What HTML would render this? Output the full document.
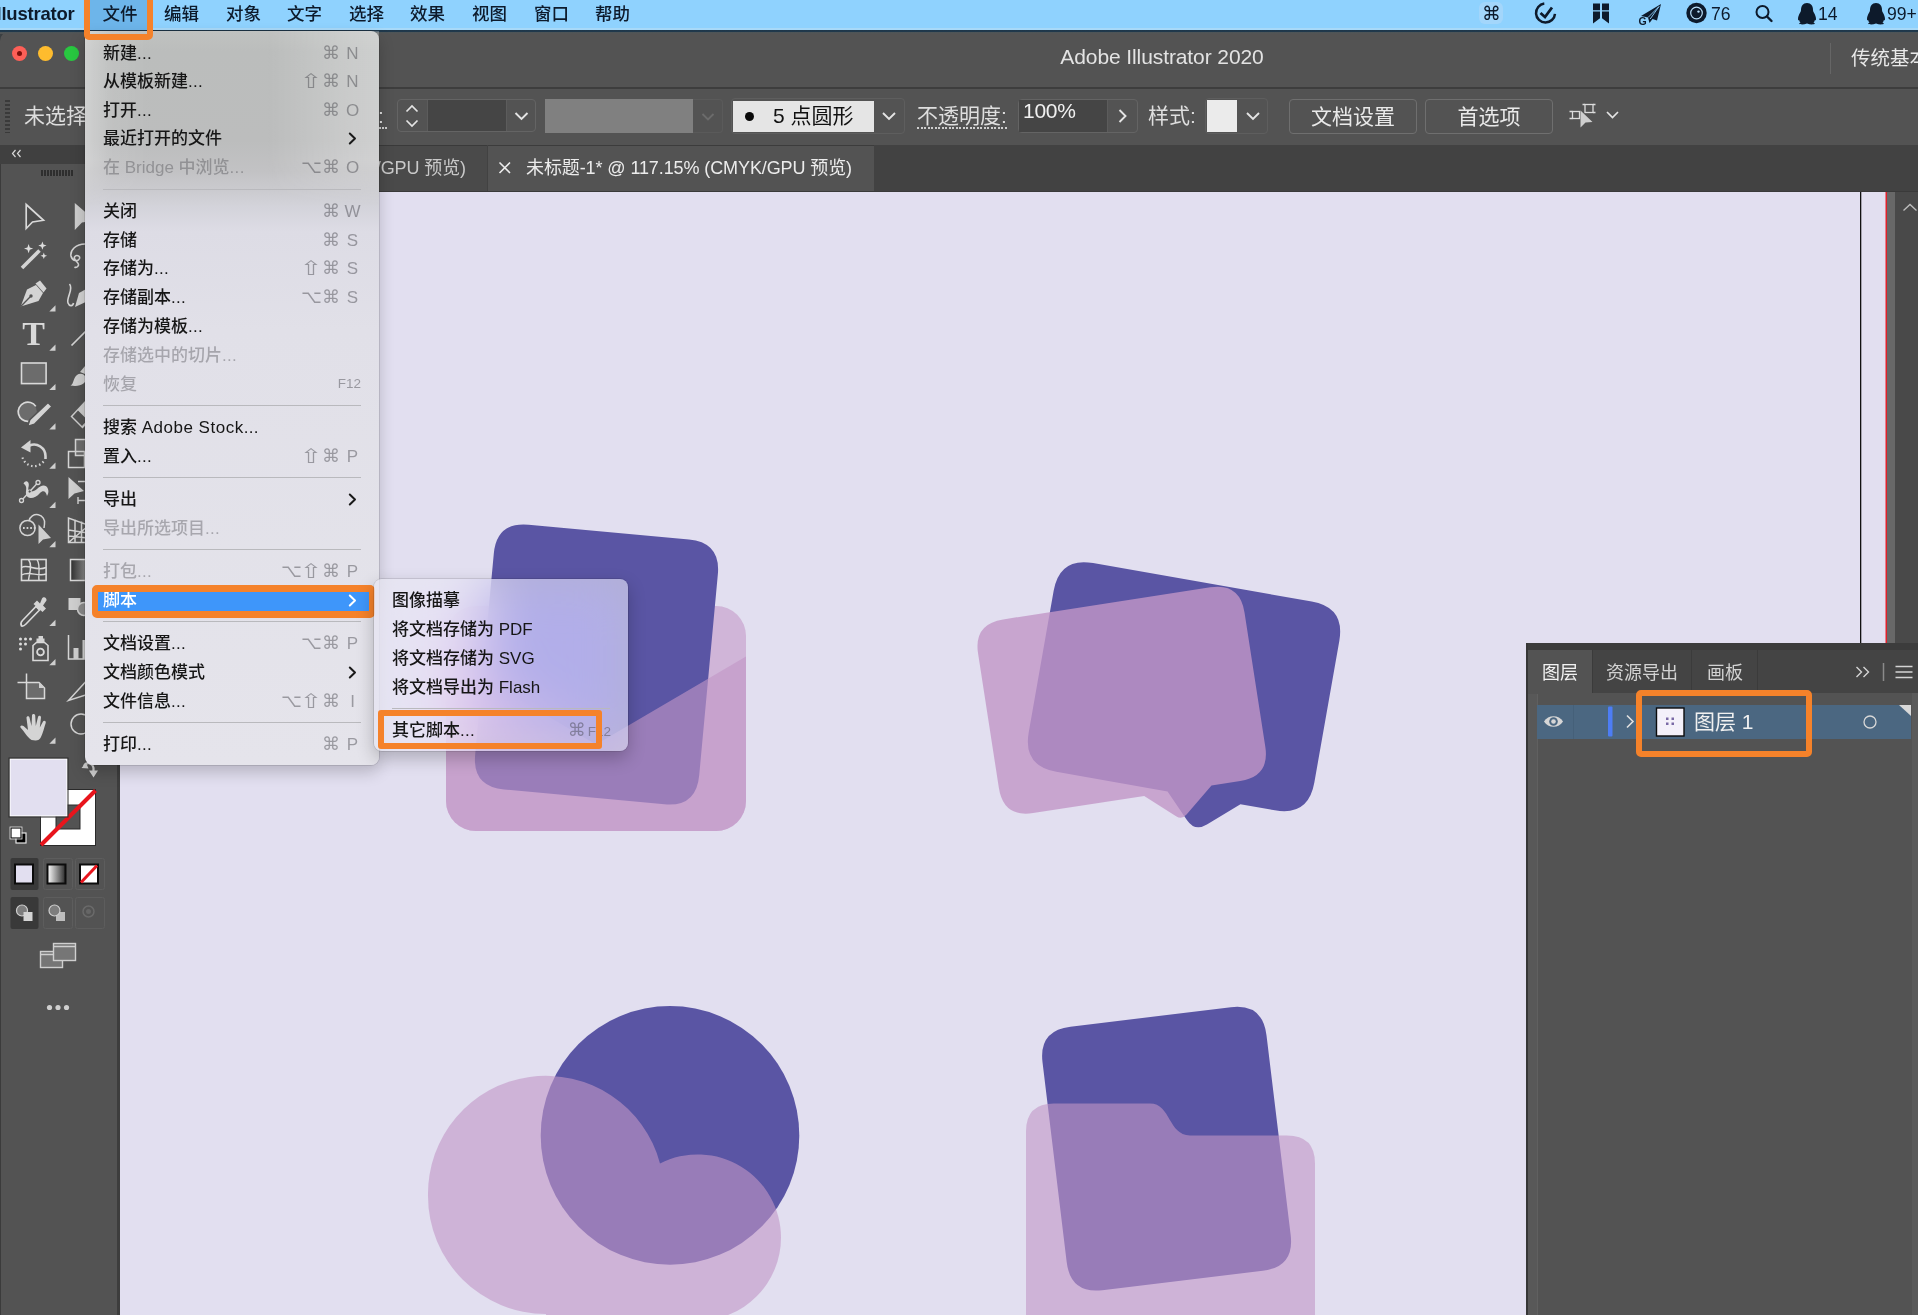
<!DOCTYPE html>
<html lang="zh-CN">
<head>
<meta charset="utf-8">
<title>Adobe Illustrator 2020</title>
<style>
html,body{margin:0;padding:0;background:#535353;}
body{width:1918px;height:1315px;overflow:hidden;position:relative;font-family:"Liberation Sans","Noto Sans CJK SC",sans-serif;color:#e6e6e6;}
.abs{position:absolute;}
#root{position:absolute;left:0;top:0;width:1918px;height:1315px;overflow:hidden;background:#535353;}
/* mac menubar */
#macbar{left:0;top:0;width:1918px;height:30px;background:linear-gradient(#8fd2fe 0,#8fd2fe 28px,#a8d9f8 28.2px,#a8d9f8 30px);}
#macbar .mi{position:absolute;top:0;height:28px;line-height:28px;font-size:17.5px;font-weight:500;color:#0d1a2b;white-space:nowrap;}
#macshadow{left:0;top:29.6px;width:1918px;height:4px;background:linear-gradient(#1d364a 0,#213a4c 45%,#4d5558 60%,#545454 100%);}
/* title bar */
#titlebar{left:0;top:32px;width:1918px;height:55px;background:#535353;}
#titleline{left:0;top:87px;width:1918px;height:2px;background:#3d3d3d;}
.tl{position:absolute;width:15px;height:15px;border-radius:50%;top:46px;}
/* control bar */
#ctrlbar{left:0;top:89px;width:1918px;height:56px;background:#535353;}
/* tab bar */
#tabbar{left:0;top:145px;width:1918px;height:47px;background:#424242;}
/* canvas */
#canvas{left:120px;top:192px;width:1798px;height:1123px;background:#e2dff0;}
/* toolbar */
#toolbar{left:0;top:164px;width:118px;height:1151px;background:#535353;}
/* menu */
.menu{position:absolute;border-radius:8px;box-shadow:0 0 0 1px rgba(0,0,0,.10),0 7px 16px rgba(0,0,0,.2);}
.menu .row{position:absolute;left:0;right:0;height:29px;line-height:30px;font-size:17px;color:#161616;white-space:nowrap;}
.menu .row .l{position:absolute;left:18px;top:0;font-weight:500;}
.menu .row .r{position:absolute;right:18px;top:-1px;color:rgba(60,60,67,.44);letter-spacing:0;}
.shift{display:inline-block;transform:scale(1.45,1.12);transform-origin:60% 55%;margin-right:3px;margin-left:2px;}
.kb{font-size:18px;}
.dots{letter-spacing:0.3px;}
.menu .row.dis .l{color:rgba(60,60,67,.36);}
.menu .sep{position:absolute;left:18px;right:18px;height:1px;background:#b9b9bd;}
.menu .row.sel .l{color:#fff;}
.menu .row .key{display:inline-block;width:17px;text-align:center;margin-left:4px;}
.chev{position:absolute;right:22px;top:8px;width:9px;height:13px;}
.kb{font-family:"DejaVu Sans","Liberation Sans",sans-serif;}
.btn{border:1.5px solid #6f6f6f;border-radius:4px;box-sizing:border-box;text-align:center;font-size:21px;line-height:33px;color:#e9e9e9;white-space:nowrap;}
.orange{position:absolute;border:6px solid #f5822a;border-radius:6px;box-sizing:border-box;}
</style>
</head>
<body>
<div id="root">

<!-- canvas -->
<div id="canvas" class="abs"></div>

<!-- artwork -->
<svg class="abs" style="left:0;top:0" width="1918" height="1315" viewBox="0 0 1918 1315" id="art">
<defs><clipPath id="envclip"><rect x="446" y="606" width="300" height="225" rx="30" ry="30"/></clipPath></defs>
<!-- 1: envelope -->
<rect x="446" y="606" width="300" height="225" rx="30" ry="30" fill="#c296c7" fill-opacity="0.58"/>
<path d="M-80.5 -133.0 H80.5 Q112.5 -133.0 112.5 -101.0 V101.0 Q112.5 133.0 80.5 133.0 H-80.5 Q-112.5 133.0 -112.5 101.0 V-101.0 Q-112.5 -133.0 -80.5 -133.0 Z" transform="translate(596.5 664.5) rotate(5.3)" fill="#5a55a4"/>
<path d="M446 656.500 L596 744.500 L746 656.500 V840 H446 Z" clip-path="url(#envclip)" fill="#c296c7" fill-opacity="0.62"/>
<!-- 2: chat bubbles -->
<path d="M-111.0 -106.0 H111.0 Q145.0 -106.0 145.0 -72.0 V72.0 Q145.0 106.0 111.0 106.0 H76.0 L46.5 131.8 Q36.0 141.0 26.2 131.0 L2.0 106.0 H-111.0 Q-145.0 106.0 -145.0 72.0 V-72.0 Q-145.0 -106.0 -111.0 -106.0 Z" transform="translate(1184 686.7) rotate(10)" fill="#5a55a4"/>
<path d="M-104.8 -98.0 H104.8 Q134.8 -98.0 134.8 -68.0 V68.0 Q134.8 98.0 104.8 98.0 H75.7 L46.6 122.9 Q41.3 127.5 36.0 122.9 L7.6 98.0 H-104.8 Q-134.8 98.0 -134.8 68.0 V-68.0 Q-134.8 -98.0 -104.8 -98.0 Z" transform="translate(1121.7 700.2) rotate(-8.8)" fill="#c296c7" fill-opacity="0.8"/>
<!-- 3: circle + cloud -->
<circle cx="670" cy="1135.4" r="129.3" fill="#5a55a4"/>
<path d="M428 1196 A118 118 0 0 1 660 1163.4 A83.300 83.300 0 0 1 781 1237.500 A83.300 83.300 0 0 1 698 1320.800 H546 V1314 A118 118 0 0 1 428 1196 Z" fill="#c296c7" fill-opacity="0.6"/>
<!-- 4: folder -->
<path d="M-80.8 -132.7 H80.8 Q112.8 -132.7 112.8 -100.7 V100.7 Q112.8 132.7 80.8 132.7 H-80.8 Q-112.8 132.7 -112.8 100.7 V-100.7 Q-112.8 -132.7 -80.8 -132.7 Z" transform="translate(1166.6 1148.7) rotate(-6.9)" fill="#5a55a4"/>
<path d="M1026 1340 V1131.600 Q1026 1103.600 1054 1103.600 H1150 C1171 1103.600 1168 1135.400 1190 1135.400 H1287 Q1315 1135.400 1315 1163.400 V1340 Z" fill="#c296c7" fill-opacity="0.6"/>
<!-- artboard edge / bleed -->
<rect x="1860" y="192" width="1.300" height="460" fill="#111"/>
<rect x="1885.500" y="192" width="1.500" height="460" fill="#e0202a"/>
<rect x="1887" y="192" width="8" height="460" fill="#686868"/>
<rect x="1895" y="192" width="23" height="460" fill="#494949"/>
<path d="M1903.500 210.500 L1910 204.500 L1916.500 210.500" fill="none" stroke="#bdbdbd" stroke-width="1.300"/>
</svg>

<!-- title bar, control bar, tab bar -->
<div id="titlebar" class="abs">
<div class="abs" style="left:0;top:0;width:1918px;height:55px;"></div>
</div>
<svg class="abs" style="left:0;top:31px" width="12" height="12" viewBox="0 0 12 12"><path d="M0 0 H10 A10 10 0 0 0 0 10 Z" fill="#3a3f42"/></svg>
<div class="tl" style="left:11.500px;background:#fe5f57;"></div>
<div class="abs" style="left:16.500px;top:51px;width:5px;height:5px;border-radius:50%;background:#7d0f0a;"></div>
<div class="tl" style="left:37.500px;background:#febc2e;"></div>
<div class="tl" style="left:63.500px;background:#28c840;"></div>
<div class="abs" style="left:962px;top:44px;width:400px;text-align:center;font-size:21px;line-height:26px;color:#e3e3e3;font-weight:normal;letter-spacing:-0.1px;">Adobe Illustrator 2020</div>
<div class="abs" style="left:1830px;top:43px;width:1px;height:31px;background:#666;"></div>
<div class="abs" style="left:1851px;top:44px;font-size:19.5px;line-height:28px;color:#e9e9e9;white-space:nowrap;">传统基本功能</div>
<div id="titleline" class="abs"></div>
<div id="ctrlbar" class="abs"></div>
<!-- control bar contents (absolute page coords) -->
<div class="abs" style="left:5px;top:100px;width:5px;height:33px;background:repeating-linear-gradient(#3a3a3a 0 2px,#535353 2px 4px);"></div>
<div class="abs cb-t" style="left:24px;top:101px;font-size:21px;line-height:30px;color:#dedede;white-space:nowrap;">未选择对象</div>
<div class="abs cb-t" style="left:378px;top:101px;font-size:21px;line-height:30px;color:#dedede;">:</div>
<div class="abs" style="left:340px;top:127px;width:47px;height:2px;background:repeating-linear-gradient(90deg,#cfcfcf 0 2px,transparent 2px 3.5px);"></div>
<!-- stepper group -->
<div class="abs" style="left:397px;top:99px;width:139px;height:33px;border:1px solid #646464;border-radius:4px;box-sizing:border-box;background:#535353;"></div>
<div class="abs" style="left:427px;top:100px;width:80px;height:31px;background:#454545;border-left:1px solid #5c5c5c;border-right:1px solid #5c5c5c;box-sizing:border-box;"></div>
<svg class="abs" style="left:397px;top:99px" width="140" height="34" viewBox="0 0 140 34">
<path d="M9.500 12.500 L15 7 L20.500 12.500 M9.500 21.500 L15 27 L20.500 21.500" fill="none" stroke="#e4e4e4" stroke-width="1.700"/>
<path d="M118.500 14 L124.500 20 L130.500 14" fill="none" stroke="#e4e4e4" stroke-width="1.900"/>
</svg>
<!-- gray box -->
<div class="abs" style="left:545px;top:99px;width:148px;height:34px;background:#808080;"></div>
<div class="abs" style="left:693px;top:99px;width:30px;height:34px;border:1px solid #5a5a5a;border-left:none;border-radius:0 4px 4px 0;box-sizing:border-box;"></div>
<svg class="abs" style="left:693px;top:99px" width="30" height="34" viewBox="0 0 30 34"><path d="M9.500 15 L15 20.500 L20.500 15" fill="none" stroke="#6c6c6c" stroke-width="1.800"/></svg>
<!-- brush -->
<div class="abs" style="left:731px;top:98px;width:174px;height:36px;border:1px solid #5e5e5e;border-radius:4px;box-sizing:border-box;"></div>
<div class="abs" style="left:733px;top:100.500px;width:141px;height:31.500px;background:#e5e5e5;"></div>
<div class="abs" style="left:744.500px;top:111.500px;width:9px;height:9px;border-radius:50%;background:#0a0a0a;"></div>
<div class="abs" style="left:773px;top:100px;font-size:21px;line-height:32px;color:#111;white-space:nowrap;">5 点圆形</div>
<svg class="abs" style="left:874px;top:99px" width="30" height="34" viewBox="0 0 30 34"><path d="M9 14 L15 20 L21 14" fill="none" stroke="#e4e4e4" stroke-width="1.900"/></svg>
<!-- opacity -->
<div class="abs" style="left:917px;top:101px;font-size:21px;line-height:30px;color:#dedede;white-space:nowrap;border-bottom:0;">不透明度:</div>
<div class="abs" style="left:917px;top:127px;width:91px;height:2px;background:repeating-linear-gradient(90deg,#cfcfcf 0 2px,transparent 2px 3.500px);"></div>
<div class="abs" style="left:1018px;top:99px;width:120px;height:34px;border:1px solid #646464;border-radius:4px;box-sizing:border-box;"></div>
<div class="abs" style="left:1019px;top:100px;width:89px;height:32px;background:#454545;border-right:1px solid #5c5c5c;box-sizing:border-box;"></div>
<div class="abs" style="left:1023px;top:96px;font-size:21px;line-height:30px;color:#f0f0f0;white-space:nowrap;letter-spacing:-0.3px;">100%</div>
<svg class="abs" style="left:1108px;top:99px" width="30" height="34" viewBox="0 0 30 34"><path d="M11.500 11 L17.500 17 L11.500 23" fill="none" stroke="#e4e4e4" stroke-width="1.900"/></svg>
<!-- style -->
<div class="abs" style="left:1148px;top:101px;font-size:21px;line-height:30px;color:#dedede;white-space:nowrap;">样式:</div>
<div class="abs" style="left:1205px;top:98px;width:63px;height:36px;border:1px solid #5e5e5e;border-radius:4px;box-sizing:border-box;"></div>
<div class="abs" style="left:1207px;top:100px;width:30px;height:32px;background:#ebebeb;"></div>
<svg class="abs" style="left:1237px;top:99px" width="30" height="34" viewBox="0 0 30 34"><path d="M10 14 L16 20 L22 14" fill="none" stroke="#e4e4e4" stroke-width="1.900"/></svg>
<!-- buttons -->
<div class="abs btn" style="left:1289px;top:99px;width:128px;height:35px;">文档设置</div>
<div class="abs btn" style="left:1425px;top:99px;width:128px;height:35px;">首选项</div>
<svg class="abs" style="left:1565px;top:99px" width="60" height="34" viewBox="1565 99 60 34">
<rect x="1572.500" y="111.500" width="7" height="7" fill="none" stroke="#dcdcdc" stroke-width="1.300"/>
<path d="M1569.500 111.500 h3 M1569.500 118.500 h3" stroke="#dcdcdc" stroke-width="1.300"/>
<rect x="1585" y="104.500" width="8" height="8" fill="#535353" stroke="#dcdcdc" stroke-width="1.300"/>
<path d="M1582.500 104.500 h2.500 M1593 104.500 h2.500 M1593 112.500 h2.500" stroke="#dcdcdc" stroke-width="1.300"/>
<path d="M1580.500 110.500 L1580.500 127.500 L1585.500 122.500 L1592.500 122 Z" fill="#cfcfcf"/>
<path d="M1607 112 L1612.500 117.500 L1618 112" fill="none" stroke="#e4e4e4" stroke-width="1.700"/>
</svg>

<div id="tabbar" class="abs">
<div class="abs" style="left:120px;top:0;width:367px;height:47px;background:#4a4a4a;border-top:1px solid #3a3a3a;box-sizing:border-box;"></div>
<div class="abs" style="left:488px;top:0;width:386px;height:47px;background:#535353;border-top:1px solid #3c3c3c;box-sizing:border-box;"></div>
<div class="abs" style="left:216px;top:9px;width:250px;text-align:right;font-size:18px;letter-spacing:-0.1px;line-height:29px;color:#c9c9c9;white-space:nowrap;">(CMYK/GPU 预览)</div>
<svg class="abs" style="left:497px;top:15px" width="16" height="16" viewBox="0 0 16 16"><path d="M2.500 2.500 L13 13 M13 2.500 L2.500 13" stroke="#ececec" stroke-width="1.600"/></svg>
<div class="abs" style="left:526px;top:9px;font-size:18px;letter-spacing:-0.1px;line-height:29px;color:#ececec;white-space:nowrap;">未标题-1* @ 117.15% (CMYK/GPU 预览)</div>
</div>
<div class="abs" style="left:120px;top:190.5px;width:1798px;height:1.5px;background:#3a3a3a;"></div>
<div class="abs" style="left:0;top:145px;width:120px;height:19px;background:#404040;"></div>
<svg class="abs" style="left:8px;top:147px" width="20" height="14" viewBox="0 0 20 14"><path d="M7.500 3 L4.500 6.500 L7.500 10 M12.500 3 L9.500 6.500 L12.500 10" fill="none" stroke="#d8d8d8" stroke-width="1.200"/></svg>


<!-- toolbar -->
<div id="toolbar" class="abs">
<div class="abs" style="left:0;top:0;width:1.3px;height:1153px;background:#3b3b3b;"></div>
<div class="abs" style="left:116.5px;top:0;width:3.5px;height:1153px;background:#3d3d3d;"></div>
<div class="abs" style="left:41px;top:5.5px;width:32px;height:6.5px;background:repeating-linear-gradient(90deg,#2e2e2e 0 2px,#535353 2px 3px);"></div>
</div>
<svg class="abs" style="left:0;top:190px" width="120" height="580" viewBox="0 190 120 580" id="tools">
<g fill="#cfcfcf" stroke="none"><path d="M55.500 311.5 h-6.200 l6.200 -6.200z"/><path d="M55.500 350.8 h-6.200 l6.200 -6.200z"/><path d="M55.500 390.1 h-6.200 l6.200 -6.200z"/><path d="M55.500 429.4 h-6.200 l6.200 -6.200z"/><path d="M55.500 468.7 h-6.200 l6.200 -6.200z"/><path d="M55.500 508.0 h-6.200 l6.200 -6.200z"/><path d="M55.500 547.3 h-6.200 l6.200 -6.200z"/><path d="M55.500 625.9 h-6.200 l6.200 -6.200z"/><path d="M55.500 665.2 h-6.200 l6.200 -6.200z"/><path d="M55.500 743.8 h-6.200 l6.200 -6.200z"/></g>
<!-- selection -->
<path d="M26.200 204.500 L26.200 228.500 L32.500 222 L43.500 220.300 Z" fill="#4b4b4b" stroke="#d9d9d9" stroke-width="1.700" stroke-linejoin="miter"/>
<path d="M74.800 203 L74.800 230 L82 222.500 L95 220.500 Z" fill="#cdcdcd"/>
<!-- magic wand -->
<path d="M22 268 L39.500 250.500" stroke="#d4d4d4" stroke-width="3.600"/>
<path d="M28.600 244 l1.200 3.400 3.400 1.200 -3.400 1.200 -1.200 3.400 -1.200 -3.400 -3.400 -1.200 3.400 -1.200z M42.400 241.500 l1.100 3 3 1.100 -3 1.100 -1.100 3 -1.100 -3 -3 -1.100 3 -1.100z M43.800 252.500 l.9 2.400 2.400 .9 -2.400 .9 -.9 2.400 -.9 -2.400 -2.400 -.9 2.400 -.9z" fill="#dcdcdc"/>
<!-- lasso -->
<path d="M85 244 C76 244 70 250 71 256 C72 261 78 262 79.500 258.500 C80.500 255.500 76 254.500 74.500 257 C73 260 79 262 78.500 265 C78 267 76 268 74.500 267" fill="none" stroke="#d4d4d4" stroke-width="1.600"/>
<!-- pen -->
<path d="M20.700 306.500 L27 289.500 L36 285 L43 293 L38.500 301 Z" fill="#d4d4d4"/>
<path d="M20.700 306.500 L30.500 296.500" stroke="#535353" stroke-width="1.300"/><circle cx="31" cy="296" r="1.700" fill="#535353"/>
<path d="M35.500 283.500 L40 280.500 L46.500 288.500 L43.500 292.500 Z" fill="#d4d4d4"/>
<!-- curvature pen -->
<path d="M69.500 284 C74 289 66 298 68 303 C69.500 307 73 306 73.500 303" fill="none" stroke="#d4d4d4" stroke-width="1.600"/>
<path d="M75 307 L79 293 L88 288 L90 300 Z" fill="#d4d4d4"/>
<!-- T -->
<text x="33.600" y="345.400" font-family="Liberation Serif, serif" font-weight="bold" font-size="34" text-anchor="middle" fill="#d9d9d9">T</text>
<!-- line -->
<path d="M71.500 345.500 L86 331" stroke="#d4d4d4" stroke-width="1.700"/>
<!-- rect -->
<rect x="21.500" y="363" width="24.600" height="20.600" fill="#6c6c6c" stroke="#d9d9d9" stroke-width="1.600"/>
<!-- paintbrush -->
<path d="M70.500 385.500 C74 384 73 378 77 375 C80 372.500 85 374 86 378 C87 383 80 387.500 70.500 385.500 Z M80 372 L90 360 L93 363 L85 374Z" fill="#cfcfcf"/>
<!-- shaper -->
<circle cx="27.600" cy="411.800" r="9.300" fill="#6c6c6c"/>
<path d="M35.800 406.400 A9.600 9.600 0 1 0 28.500 421.300" fill="none" stroke="#d9d9d9" stroke-width="1.700"/>
<path d="M48 402.500 L52 406.500 L34.500 424.200 L27.500 426.500 L29.800 419.700 Z" fill="#d4d4d4" stroke="#535353" stroke-width="1.600"/>
<!-- eraser -->
<path d="M70.500 416.500 L85 401 L97 413 L82.500 428.500 Z" fill="#cdcdcd"/>
<path d="M72.500 416.500 L78 410.500 L87.500 420 L82 426 Z" fill="#535353"/>
<!-- rotate -->
<path d="M29.500 445.500 A11.500 11.500 0 0 1 45.500 456 L45.500 459" fill="none" stroke="#d4d4d4" stroke-width="2.600"/>
<path d="M21 447.500 L30.500 440 L30.500 452.500 Z" fill="#d4d4d4"/>
<path d="M22.500 457.500 A12 12 0 0 0 44.500 460" fill="none" stroke="#d4d4d4" stroke-width="2.200" stroke-dasharray="1.500 2.600"/>
<!-- scale -->
<rect x="75.500" y="439.500" width="16" height="16" fill="#6c6c6c" stroke="#d4d4d4" stroke-width="1.500"/>
<rect x="68.500" y="451.500" width="16" height="16" fill="none" stroke="#d4d4d4" stroke-width="1.500"/>
<!-- width / warp -->
<path d="M23.500 483.500 C26 479 30 482 28.500 487 C27 492 33 493 37 489 C41 485 46 484 48 489 C49 492 48 494 47 496 C46 491 43 490 40 493 C35 499 27 500 26 494 C25.500 490 28 487 23.500 483.500 Z" fill="#d4d4d4"/>
<path d="M21.500 500.500 L38 482.500" stroke="#d4d4d4" stroke-width="1.400"/>
<circle cx="21.500" cy="500.500" r="2" fill="#535353" stroke="#d4d4d4" stroke-width="1.300"/><circle cx="38" cy="482.500" r="2" fill="#535353" stroke="#d4d4d4" stroke-width="1.300"/><circle cx="29.700" cy="491.500" r="1.600" fill="#535353" stroke="#d4d4d4" stroke-width="1"/>
<!-- free transform -->
<path d="M68.500 477 L68.500 499 L74.500 493.500 L84 491 Z" fill="#cfcfcf"/>
<path d="M78 481.500 h8 M78 500.500 h8 M78 497 v7" stroke="#d4d4d4" stroke-width="1.400"/>
<!-- shape builder -->
<circle cx="27.500" cy="528" r="7.600" fill="none" stroke="#d4d4d4" stroke-width="1.500"/>
<path d="M29 521 A7.500 7.500 0 0 1 44.500 524 L44 528" fill="none" stroke="#d4d4d4" stroke-width="1.500"/>
<path d="M23 528 h14" stroke="#d4d4d4" stroke-width="1.800" stroke-dasharray="1.700 1.900"/>
<path d="M38.500 524.500 L38.500 544 L43 539.500 L51 538 Z" fill="#cfcfcf"/>
<!-- perspective grid -->
<path d="M68.500 518 L68.500 542.500 L88 542.500 L88 525 Z M68.500 530 L88 533 M68.500 536 L88 538 M75 519.500 V542.500 M81.500 521.500 V542.500 M68.500 542.500 L88 526" fill="none" stroke="#d4d4d4" stroke-width="1.500"/>
<!-- mesh -->
<rect x="21.500" y="559.500" width="24.600" height="21" fill="none" stroke="#d9d9d9" stroke-width="1.600"/>
<path d="M21.500 567.500 C28 563.500 36 572 46 567.500 M21.500 575 C29 570.500 38 577 46 574 M28.500 559.500 C33 566 29 574 28.500 580.500 M37 559.500 C41 566 38 574 39 580.500" fill="none" stroke="#d9d9d9" stroke-width="1.400"/>
<!-- gradient -->
<defs><linearGradient id="gr1" x1="0" x2="1"><stop offset="0" stop-color="#2e2e2e"/><stop offset="1" stop-color="#bdbdbd"/></linearGradient></defs>
<rect x="70.500" y="559.500" width="24" height="21" fill="url(#gr1)" stroke="#d9d9d9" stroke-width="1.500"/>
<!-- eyedropper -->
<path d="M21.500 626 C20 623.500 21 622 22.500 620.500 L36 606.500 L39.500 610 L26 624 C24.500 625.500 23 626.500 21.500 626 Z" fill="#535353" stroke="#d9d9d9" stroke-width="1.600"/>
<path d="M33.500 604 L37 600.500 L40 603.500 L42 598.500 C43.500 596 47 597.500 46.500 600.500 L43 605.500 L46 608.500 L42.500 612 Z" fill="#d4d4d4"/>
<!-- blend -->
<rect x="68.500" y="598" width="12" height="12" fill="#cfcfcf"/>
<circle cx="84" cy="609" r="6.500" fill="#8a8a8a" stroke="#cfcfcf" stroke-width="1.500"/>
<!-- sprayer -->
<g fill="#dcdcdc"><circle cx="20.500" cy="639" r="1.500"/><circle cx="25.500" cy="639" r="1.500"/><circle cx="30.500" cy="639" r="1.500"/><circle cx="20.500" cy="644" r="1.500"/><circle cx="25.500" cy="644" r="1.500"/><circle cx="20.500" cy="649" r="1.500"/></g>
<path d="M33 660.500 V645.500 L36.500 642.500 H44.500 L48 645.500 V660.500 Z" fill="#535353" stroke="#d9d9d9" stroke-width="1.600"/>
<path d="M36.500 642 V638.500 H38.500 V636 H43 V638.500 H44.500 V642Z" fill="#d4d4d4"/>
<circle cx="40.500" cy="652" r="3.400" fill="none" stroke="#d9d9d9" stroke-width="1.800"/>
<!-- graph -->
<path d="M68.500 635 V659 H90" fill="none" stroke="#d4d4d4" stroke-width="1.500"/>
<path d="M73.500 648 h5 v11 h-5z M82.500 640 h5 v19 h-5z" fill="#cfcfcf"/>
<!-- artboard -->
<path d="M26.500 673.500 V683 M17.500 682.500 H27" stroke="#d9d9d9" stroke-width="1.500"/>
<path d="M26.500 682.500 H39 L44.500 688 V698.500 H26.500 Z" fill="#6c6c6c" stroke="#d9d9d9" stroke-width="1.500"/>
<path d="M39 682.500 V688 H44.500 Z" fill="#cfcfcf"/>
<!-- slice -->
<path d="M68.500 700.500 L90 677 L92 693 Z" fill="none" stroke="#d4d4d4" stroke-width="1.500"/>
<!-- hand -->
<path d="M31.500 740 C27 737 24 731 20.500 727.500 C19.500 726 21.500 724.500 23.500 726 L28 730 L26.500 718 C26.300 716 29 715.500 29.500 717.500 L31.500 726 L32 715.500 C32 713.500 35 713.500 35.200 715.500 L35.800 726 L38 717 C38.500 715 41.200 715.500 41 717.500 L39.800 727.500 L43 721.500 C44 720 46.300 721 45.700 723 C44 728 43 733 41 737 C40 739.500 38 740.500 35.500 740.500 Z" fill="#d4d4d4"/>
<!-- zoom -->
<circle cx="81" cy="724" r="10" fill="none" stroke="#d4d4d4" stroke-width="1.500"/>
</svg>
<!-- fill / stroke -->
<svg class="abs" style="left:0;top:750px" width="120" height="280" viewBox="0 750 120 280">
<rect x="40.500" y="789.500" width="55" height="56" fill="#fff" stroke="#2a2a2a" stroke-width="1"/>
<rect x="56" y="805" width="24" height="24" fill="#535353" stroke="#2a2a2a" stroke-width="1"/>
<path d="M41 845 L95.500 790.500" stroke="#e8141c" stroke-width="4"/>
<rect x="10" y="759" width="57" height="57" fill="#e2dff0" stroke="#fff" stroke-width="1.200"/>
<rect x="9" y="758" width="59" height="59" fill="none" stroke="#2f2f2f" stroke-width="1"/>
<path d="M84 766 C86 762 92 762 93.500 768 L93.500 772" fill="none" stroke="#cfcfcf" stroke-width="2.200"/>
<path d="M81.500 768 L86 762.500 L88.500 768.500 Z M89 770.500 L98 770.500 L93.500 777.500 Z" fill="#cfcfcf"/>
<rect x="16" y="833" width="10" height="10" fill="#000" stroke="#e6e6e6" stroke-width="1.200"/>
<rect x="11" y="828" width="10" height="10" fill="#fff" stroke="#111" stroke-width="1.200"/>
<rect x="10" y="827" width="12" height="12" fill="none" stroke="#e6e6e6" stroke-width="0.800"/>
<!-- color mode buttons -->
<rect x="10.500" y="858" width="28" height="32" rx="2" fill="#393939"/>
<rect x="43.500" y="858.500" width="29" height="31" rx="2" fill="none" stroke="#5d5d5d" stroke-width="1"/>
<rect x="75.500" y="858.500" width="29" height="31" rx="2" fill="none" stroke="#5d5d5d" stroke-width="1"/>
<rect x="15" y="864.500" width="18" height="19" fill="#e2dff0" stroke="#0c0c0c" stroke-width="2"/>
<defs><linearGradient id="gr2" x1="0" x2="1"><stop offset="0" stop-color="#fff"/><stop offset="1" stop-color="#2a2a2a"/></linearGradient></defs>
<rect x="47.500" y="864.500" width="18" height="19" fill="url(#gr2)" stroke="#0c0c0c" stroke-width="2"/>
<rect x="80" y="864.500" width="18" height="19" fill="#fff" stroke="#0c0c0c" stroke-width="2"/>
<path d="M81 882.500 L97 865.500" stroke="#e8141c" stroke-width="3"/>
<!-- draw mode buttons -->
<rect x="10.500" y="897" width="28" height="32" rx="2" fill="#393939"/>
<rect x="43.500" y="897.500" width="29" height="31" rx="2" fill="none" stroke="#5d5d5d" stroke-width="1"/>
<rect x="75.500" y="897.500" width="29" height="31" rx="2" fill="none" stroke="#5d5d5d" stroke-width="1"/>
<circle cx="22" cy="910.500" r="5.500" fill="#7d7d7d" stroke="#cfcfcf" stroke-width="1.200"/>
<rect x="23.500" y="912" width="9" height="9" fill="#d4d4d4"/>
<rect x="56" y="912" width="9" height="9" fill="#bdbdbd"/>
<circle cx="54.500" cy="910.500" r="5.500" fill="#7d7d7d" stroke="#cfcfcf" stroke-width="1.200"/>
<circle cx="88.500" cy="911.500" r="5.500" fill="none" stroke="#6a6a6a" stroke-width="1.500"/>
<circle cx="88.500" cy="911.500" r="2.500" fill="#666"/>
<!-- screen mode -->
<rect x="40.500" y="951.500" width="22" height="16" fill="#767676" stroke="#cfcfcf" stroke-width="1.400"/>
<rect x="53.500" y="943.500" width="22" height="17" fill="#767676" stroke="#cfcfcf" stroke-width="1.400"/>
<path d="M53.500 946.500 h22 M40.500 954.500 h13" stroke="#cfcfcf" stroke-width="1.400"/>
<circle cx="49.500" cy="1007.500" r="2.600" fill="#cfcfcf"/><circle cx="58" cy="1007.500" r="2.600" fill="#cfcfcf"/><circle cx="66.500" cy="1007.500" r="2.600" fill="#cfcfcf"/>
</svg>


<!-- right panel -->
<div id="rpanel" class="abs" style="left:1526px;top:643px;width:392px;height:672px;background:#535353;">
<div class="abs" style="left:0;top:0;width:392px;height:7px;background:#3c3c3c;"></div>
<div class="abs" style="left:0;top:0;width:2px;height:672px;background:#363636;"></div>
<div class="abs" style="left:2px;top:50px;width:8.5px;height:622px;background:#585858;"></div>
<div class="abs" style="left:10.5px;top:50px;width:1px;height:622px;background:#606060;"></div>
<div class="abs" style="left:385.5px;top:50px;width:6.5px;height:622px;background:#5a5a5a;"></div>
<div class="abs" style="left:2px;top:7px;width:390px;height:43px;background:#444;"></div>
<div class="abs" style="left:2px;top:7px;width:64px;height:44px;background:#535353;"></div>
<div class="abs" style="left:66px;top:7px;width:1px;height:43px;background:#3b3b3b;"></div>
<div class="abs" style="left:165px;top:7px;width:1px;height:43px;background:#3b3b3b;"></div>
<div class="abs" style="left:231px;top:7px;width:1px;height:43px;background:#3b3b3b;"></div>
<div class="abs" style="left:16px;top:15.5px;font-size:18px;line-height:28px;color:#f2f2f2;white-space:nowrap;">图层</div>
<div class="abs" style="left:80px;top:15.5px;font-size:18px;line-height:28px;color:#d2d2d2;white-space:nowrap;">资源导出</div>
<div class="abs" style="left:181px;top:15.5px;font-size:18px;line-height:28px;color:#d2d2d2;white-space:nowrap;">画板</div>
<svg class="abs" style="left:320px;top:14px" width="72" height="30" viewBox="0 0 72 30">
<path d="M10.500 10 L15.500 15 L10.500 20 M17.500 10 L22.500 15 L17.500 20" fill="none" stroke="#d4d4d4" stroke-width="1.400"/>
<path d="M37.500 6 V24" stroke="#8a8a8a" stroke-width="1.500"/>
<path d="M49.500 9.500 H66.500 M49.500 15 H66.500 M49.500 20.500 H66.500" stroke="#d4d4d4" stroke-width="1.500"/>
</svg>
<!-- layer row -->
<div class="abs" style="left:11px;top:62px;width:374px;height:34px;background:#4b6781;"></div>
<div class="abs" style="left:47px;top:62px;width:1px;height:34px;background:#456079;"></div>
<svg class="abs" style="left:11px;top:62px" width="374" height="34" viewBox="0 0 374 34">
<path d="M7 16.500 C11 9.500 22 9.500 26 16.500 C22 23.500 11 23.500 7 16.500 Z" fill="#d6d6d6"/>
<circle cx="16.500" cy="16.500" r="4.300" fill="#4b6781"/><circle cx="16.500" cy="16.500" r="2.300" fill="#d6d6d6"/>
<rect x="71" y="1.500" width="4.500" height="30" rx="1" fill="#4d7df5"/>
<path d="M90 10.500 L96 16.500 L90 22.500" fill="none" stroke="#e0e0e0" stroke-width="1.600"/>
<rect x="119.500" y="3" width="27.500" height="28" fill="#f4f1fa" stroke="#0b0b0b" stroke-width="1.400"/>
<g fill="#7a6aa5"><rect x="129" y="12.500" width="2.500" height="2.500"/><rect x="134.500" y="12.500" width="2.500" height="2.500"/><rect x="129" y="17.500" width="2.500" height="2.500"/><rect x="134.500" y="17.500" width="2.500" height="2.500"/></g>
<circle cx="333" cy="17" r="6" fill="none" stroke="#d8d8d8" stroke-width="1.300"/>
<path d="M362 0 H374 V11 Z" fill="#d8d8d8"/>
</svg>
<div class="abs" style="left:168px;top:63px;font-size:21px;line-height:32px;color:#f0f0f0;white-space:nowrap;">图层 1</div>
</div>
<div class="orange" style="left:1636px;top:690px;width:176px;height:67px;border-width:6.500px;border-radius:5px;"></div>

<!-- mac menubar -->
<div id="macbar" class="abs">
<div class="abs" style="left:90px;top:0;width:60px;height:30px;background:#6db5ea;"></div>
<div class="mi" style="left:-8.5px;font-weight:bold;font-size:18.5px;letter-spacing:-0.2px;">Illustrator</div>
<div class="mi" style="left:102.5px;">文件</div>
<div class="mi" style="left:164px;">编辑</div>
<div class="mi" style="left:226px;">对象</div>
<div class="mi" style="left:287px;">文字</div>
<div class="mi" style="left:349px;">选择</div>
<div class="mi" style="left:410px;">效果</div>
<div class="mi" style="left:472px;">视图</div>
<div class="mi" style="left:534px;">窗口</div>
<div class="mi" style="left:595px;">帮助</div>
<!-- status icons -->
<svg class="abs" style="left:1470px;top:0" width="448" height="30" viewBox="1470 0 448 30">
<rect x="1479" y="2" width="24" height="22" rx="6" fill="#a3d6fb"/>
<text x="1491.5" y="20" font-size="19" text-anchor="middle" fill="#0d1a2b" font-family="DejaVu Sans, sans-serif">⌘</text>
<path d="M1544.3 3.600 A9.500 9.500 0 1 0 1555 13.800" fill="none" stroke="#0d1a2b" stroke-width="2.500"/>
<path d="M1540.5 13 L1545 17 L1552 7.500" fill="none" stroke="#0d1a2b" stroke-width="2.800" stroke-linecap="butt" stroke-linejoin="miter"/>
<path d="M1593 3.400 h7 v6.800 h-7z M1602 3.400 h7 v6.800 h-7z M1593 11.400 h7 v6.800 l-7 5.400z M1602 11.400 h7 v12.200 l-7 -5.400z" fill="#0d1a2b"/>
<path d="M1661 4 L1641 16 L1648 17.5 L1649.5 23 L1652.5 19 L1657 20.5 Z" fill="#0d1a2b"/>
<path d="M1648 17.5 L1659 6.5 L1650.2 19" fill="none" stroke="#90d1fe" stroke-width="0.9"/>
<text x="1638.5" y="24.5" font-size="10.5" font-weight="bold" fill="#0d1a2b" font-family="Liberation Sans, sans-serif">G</text>
<circle cx="1696.5" cy="13" r="10.2" fill="#0d1a2b"/>
<circle cx="1696.5" cy="13" r="5.8" fill="none" stroke="#b9e0fb" stroke-width="1.2"/><circle cx="1698.5" cy="11.6" r="1.2" fill="#b9e0fb"/>
<text x="1711" y="20" font-size="17.6" fill="#0d1a2b" font-family="Liberation Sans, sans-serif">76</text>
<circle cx="1762.5" cy="12" r="6" fill="none" stroke="#0d1a2b" stroke-width="2"/>
<path d="M1767 16.5 L1771.5 21" stroke="#0d1a2b" stroke-width="2.4" stroke-linecap="round"/>
<path d="M1807 3 c4 0 6 3.2 6 7 c0 1 .2 1.6 .8 2.6 c1.2 2 2.2 4.4 2.2 6.4 c0 1.4 -.6 1.6 -1.2 1 c0 .8 -.4 1.8 -1.400 2.500 c.9 .3 1.4 .7 1.4 1.100 c0 .6 -1.400 .8 -3 .8 c-1.600 0 -3 -.2 -4.800 -.8 c-1.800 .6 -3.200 .8 -4.800 .8 c-1.600 0 -3 -.2 -3 -.8 c0 -.4 .5 -.8 1.400 -1.100 c-1 -.7 -1.400 -1.700 -1.400 -2.500 c-.6 .6 -1.200 .4 -1.200 -1 c0 -2 1 -4.400 2.200 -6.400 c.6 -1 .8 -1.600 .8 -2.600 c0 -3.800 2 -7 6 -7z" fill="#0d1a2b"/>
<text x="1818" y="20" font-size="17.6" fill="#0d1a2b" font-family="Liberation Sans, sans-serif">14</text>
<path d="M1807 3 c4 0 6 3.2 6 7 c0 1 .2 1.6 .8 2.6 c1.2 2 2.2 4.4 2.2 6.4 c0 1.4 -.6 1.6 -1.2 1 c0 .8 -.4 1.8 -1.400 2.500 c.9 .3 1.4 .7 1.4 1.100 c0 .6 -1.400 .8 -3 .8 c-1.600 0 -3 -.2 -4.800 -.8 c-1.800 .6 -3.200 .8 -4.800 .8 c-1.600 0 -3 -.2 -3 -.8 c0 -.4 .5 -.8 1.400 -1.100 c-1 -.7 -1.400 -1.700 -1.400 -2.500 c-.6 .6 -1.200 .4 -1.200 -1 c0 -2 1 -4.400 2.200 -6.400 c.6 -1 .8 -1.600 .8 -2.600 c0 -3.800 2 -7 6 -7z" fill="#0d1a2b" transform="translate(69 0)"/>
<text x="1887" y="20" font-size="17.6" fill="#0d1a2b" font-family="Liberation Sans, sans-serif">99+</text>
</svg>
</div>
<div id="macshadow" class="abs"></div>

<!-- menus -->
<div id="filemenu" class="menu" style="left:85px;top:31px;width:294px;height:734px;border-radius:0 8px 8px 8px;background:linear-gradient(180deg,#c0c2c0 0px,#bbbdbc 20px,#bcbdbd 110px,#c2c2c4 140px,#cacace 158px,#d3d3da 175px,#dddce5 200px,#e1e0e8 300px,#e5e4eb 734px);">
<div class="abs" style="left:0;top:0;width:294px;height:175px;background:linear-gradient(90deg,rgba(255,255,255,.30) 0,rgba(255,255,255,.08) 9%,rgba(255,255,255,0) 22%,rgba(255,255,255,0) 62%,rgba(255,255,255,.22) 90%,rgba(255,255,255,.28) 100%);-webkit-mask-image:linear-gradient(180deg,#000 0,#000 130px,transparent 175px);mask-image:linear-gradient(180deg,#000 0,#000 130px,transparent 175px);"></div>
<div class="abs" style="left:7px;top:555px;width:281px;height:29px;border-radius:5px;background:#3e96fa;"></div>
<div class="row" style="top:7.5px"><span class="l">新建<span class="dots">...</span></span><span class="r"><span class="kb">⌘</span><span class="key">N</span></span></div>
<div class="row" style="top:36.0px"><span class="l">从模板新建<span class="dots">...</span></span><span class="r"><span class="kb"><span class="shift">⇧</span>⌘</span><span class="key">N</span></span></div>
<div class="row" style="top:64.5px"><span class="l">打开<span class="dots">...</span></span><span class="r"><span class="kb">⌘</span><span class="key">O</span></span></div>
<div class="row" style="top:93.0px"><span class="l">最近打开的文件</span><svg class="chev" viewBox="0 0 9 13"><path d="M1.800 1.500 L7 6.500 L1.800 11.500" fill="none" stroke="#1a1a1a" stroke-width="2" stroke-linecap="round" stroke-linejoin="round"/></svg></div>
<div class="row dis" style="top:121.5px"><span class="l">在 Bridge 中浏览<span class="dots">...</span></span><span class="r"><span class="kb">⌥⌘</span><span class="key">O</span></span></div>
<div class="sep" style="top:157.5px"></div>
<div class="row" style="top:165.5px"><span class="l">关闭</span><span class="r"><span class="kb">⌘</span><span class="key">W</span></span></div>
<div class="row" style="top:194.5px"><span class="l">存储</span><span class="r"><span class="kb">⌘</span><span class="key">S</span></span></div>
<div class="row" style="top:223.0px"><span class="l">存储为<span class="dots">...</span></span><span class="r"><span class="kb"><span class="shift">⇧</span>⌘</span><span class="key">S</span></span></div>
<div class="row" style="top:252.0px"><span class="l">存储副本<span class="dots">...</span></span><span class="r"><span class="kb">⌥⌘</span><span class="key">S</span></span></div>
<div class="row" style="top:280.5px"><span class="l">存储为模板<span class="dots">...</span></span></div>
<div class="row dis" style="top:309.5px"><span class="l">存储选中的切片<span class="dots">...</span></span></div>
<div class="row dis" style="top:338.5px"><span class="l">恢复</span><span class="r" style="font-size:13.500px;">F12</span></div>
<div class="sep" style="top:374.0px"></div>
<div class="row" style="top:381.5px"><span class="l">搜索 <span style="letter-spacing:0.5px">Adobe Stock</span><span class="dots">...</span></span></div>
<div class="row" style="top:410.5px"><span class="l">置入<span class="dots">...</span></span><span class="r"><span class="kb"><span class="shift">⇧</span>⌘</span><span class="key">P</span></span></div>
<div class="sep" style="top:446.0px"></div>
<div class="row" style="top:453.5px"><span class="l">导出</span><svg class="chev" viewBox="0 0 9 13"><path d="M1.800 1.500 L7 6.500 L1.800 11.500" fill="none" stroke="#1a1a1a" stroke-width="2" stroke-linecap="round" stroke-linejoin="round"/></svg></div>
<div class="row dis" style="top:482.5px"><span class="l">导出所选项目<span class="dots">...</span></span></div>
<div class="sep" style="top:518.0px"></div>
<div class="row dis" style="top:525.5px"><span class="l">打包<span class="dots">...</span></span><span class="r"><span class="kb">⌥<span class="shift">⇧</span>⌘</span><span class="key">P</span></span></div>
<div class="row sel" style="top:554.5px"><span class="l">脚本</span><svg class="chev" viewBox="0 0 9 13"><path d="M1.800 1.500 L7 6.500 L1.800 11.500" fill="none" stroke="#fff" stroke-width="2" stroke-linecap="round" stroke-linejoin="round"/></svg></div>
<div class="sep" style="top:590.0px"></div>
<div class="row" style="top:597.5px"><span class="l">文档设置<span class="dots">...</span></span><span class="r"><span class="kb">⌥⌘</span><span class="key">P</span></span></div>
<div class="row" style="top:626.5px"><span class="l">文档颜色模式</span><svg class="chev" viewBox="0 0 9 13"><path d="M1.800 1.500 L7 6.500 L1.800 11.500" fill="none" stroke="#1a1a1a" stroke-width="2" stroke-linecap="round" stroke-linejoin="round"/></svg></div>
<div class="row" style="top:655.5px"><span class="l">文件信息<span class="dots">...</span></span><span class="r"><span class="kb">⌥<span class="shift">⇧</span>⌘</span><span class="key">I</span></span></div>
<div class="sep" style="top:691.0px"></div>
<div class="row" style="top:698.5px"><span class="l">打印<span class="dots">...</span></span><span class="r"><span class="kb">⌘</span><span class="key">P</span></span></div>
</div>
<div class="orange" style="left:91.5px;top:585px;width:283px;height:32.5px;border-width:7px 6.6px;border-radius:5px;"></div>
<div class="orange" style="left:84px;top:-8px;width:68.5px;height:47.5px;border-width:6px;border-radius:0 0 5px 5px;"></div>
<div id="submenu" class="menu" style="left:374px;top:579px;width:254px;height:172px;background:rgba(232,232,240,0.62);-webkit-backdrop-filter:blur(28px) saturate(1.8);backdrop-filter:blur(28px) saturate(1.8);box-shadow:0 0 0 1px rgba(0,0,0,.10),0 7px 18px rgba(0,0,0,.24);">
<div class="row" style="top:6.5px"><span class="l">图像描摹</span></div>
<div class="row" style="top:35.5px"><span class="l">将文档存储为 PDF</span></div>
<div class="row" style="top:64.5px"><span class="l">将文档存储为 SVG</span></div>
<div class="row" style="top:93.5px"><span class="l">将文档导出为 Flash</span></div>
<div class="sep" style="top:129px"></div>
<div class="row" style="top:136.5px"><span class="l">其它脚本<span class="dots">...</span></span><span class="r" style="right:17px"><span class="kb">⌘</span><span style="font-size:13.500px;margin-left:2px;">F12</span></span></div>
</div>
<div class="orange" style="left:378px;top:710px;width:224px;height:39px;border-width:6px;border-radius:3px;"></div>

</div>
</body>
</html>
